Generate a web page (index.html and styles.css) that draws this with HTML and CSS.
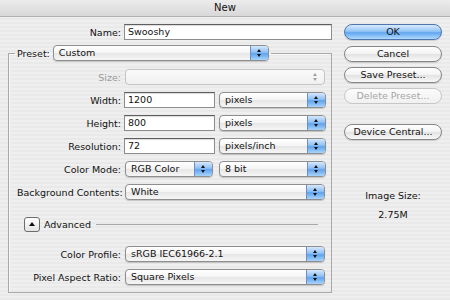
FILE: index.html
```html
<!DOCTYPE html>
<html lang="en">
<head>
    <meta charset="UTF-8">
    <title>New</title>
    <link rel="stylesheet" href="styles.css">
</head>
<body>
    <div class="titlebar">New</div>

    <div class="dialog">
        <div class="left">
            <div class="name-row">
                <span class="name-lbl">Name:</span>
                <div class="field name-field">Swooshy</div>
            </div>

            <fieldset class="preset">
                <legend>
                    Preset:
                    <div class="popup w-preset"><span class="popup-text">Custom</span><span class="popup-btn"></span></div>
                </legend>

                <div class="row">
                    <span class="lbl disabled">Size:</span>
                    <div class="popup w-full off"><span class="popup-text"></span><span class="popup-btn"></span></div>
                </div>
                <div class="row">
                    <span class="lbl">Width:</span>
                    <div class="field w-num">1200</div>
                    <div class="popup w-unit"><span class="popup-text">pixels</span><span class="popup-btn"></span></div>
                </div>
                <div class="row">
                    <span class="lbl">Height:</span>
                    <div class="field w-num">800</div>
                    <div class="popup w-unit"><span class="popup-text">pixels</span><span class="popup-btn"></span></div>
                </div>
                <div class="row">
                    <span class="lbl">Resolution:</span>
                    <div class="field w-num">72</div>
                    <div class="popup w-unit"><span class="popup-text">pixels/inch</span><span class="popup-btn"></span></div>
                </div>
                <div class="row">
                    <span class="lbl">Color Mode:</span>
                    <div class="popup w-mode"><span class="popup-text">RGB Color</span><span class="popup-btn"></span></div>
                    <div class="popup w-unit"><span class="popup-text">8 bit</span><span class="popup-btn"></span></div>
                </div>
                <div class="row">
                    <span class="lbl">Background Contents:</span>
                    <div class="popup w-full"><span class="popup-text">White</span><span class="popup-btn"></span></div>
                </div>

                <div class="row advanced">
                    <span class="disclosure"></span>
                    <span class="adv-text">Advanced</span>
                    <span class="adv-line"></span>
                </div>

                <div class="row row-profile">
                    <span class="lbl">Color Profile:</span>
                    <div class="popup w-full"><span class="popup-text">sRGB IEC61966-2.1</span><span class="popup-btn"></span></div>
                </div>
                <div class="row">
                    <span class="lbl">Pixel Aspect Ratio:</span>
                    <div class="popup w-full"><span class="popup-text">Square Pixels</span><span class="popup-btn"></span></div>
                </div>
            </fieldset>
        </div>

        <div class="right">
            <div class="btn btn-default">OK</div>
            <div class="btn">Cancel</div>
            <div class="btn">Save Preset...</div>
            <div class="btn btn-off">Delete Preset...</div>
            <div class="btn btn-device">Device Central...</div>

            <div class="image-size">
                <div>Image Size:</div>
                <div class="size-value">2.75M</div>
            </div>
        </div>
    </div>
</body>
</html>
```

FILE: styles.css
```css
body {
    margin: 0;
    width: 450px;
    height: 300px;
    overflow: hidden;
    font-family: "DejaVu Sans", Verdana, sans-serif;
    font-size: 9.5px;
    color: #111;
    background: repeating-linear-gradient(#efefef 0 2px, #e9e9e9 2px 4px);
}

.titlebar {
    height: 16px;
    line-height: 16px;
    text-align: center;
    font-size: 10px;
    background: linear-gradient(#ececec, #d8d8d8);
    border-bottom: 1px solid #b0b0b0;
}

.dialog {
    display: flex;
    padding: 7px 8px 0 8px;
}

.left {
    width: 324px;
}

.right {
    width: 98px;
    margin-left: 12px;
}

/* name row */
.name-row {
    display: flex;
    align-items: center;
    height: 16px;
}

.name-lbl {
    width: 113px;
    text-align: right;
    margin-right: 3px;
}

.name-field {
    width: 208px;
}

/* text fields */
.field {
    box-sizing: border-box;
    height: 16px;
    line-height: 14px;
    padding: 0 3px;
    background: #fff;
    border: 1px solid #8d8d8d;
    border-top-color: #5e5e5e;
    box-shadow: inset 0 1px 1px rgba(0, 0, 0, 0.15);
}

/* preset group */
.preset {
    margin: 5px 0 0 0;
    padding: 8px 5px 7px 8px;
    min-inline-size: 0;
    border: 1px solid #a8a8a8;
    box-shadow: inset 1px 1px 0 #f8f8f8;
}

.preset legend {
    display: flex;
    align-items: center;
    margin-left: -2px;
    padding: 0 2px;
}

.row {
    display: flex;
    align-items: center;
    height: 16px;
    margin-top: 7px;
}

.row:first-of-type {
    margin-top: 0;
}

.lbl {
    width: 104px;
    margin-right: 4px;
    text-align: right;
    white-space: nowrap;
}

.disabled {
    color: #9a9a9a;
}

/* popup menus */
.popup {
    box-sizing: border-box;
    display: flex;
    height: 16px;
    border: 1px solid #8e8e8e;
    border-radius: 4px;
    background: linear-gradient(#ffffff, #f4f4f4 50%, #e6e6e6 51%, #f6f6f6);
    box-shadow: 0 1px 1px rgba(0, 0, 0, 0.18);
    overflow: hidden;
}

.popup-text {
    flex: 1;
    line-height: 14px;
    padding-left: 5px;
    white-space: nowrap;
    overflow: hidden;
}

.popup-btn {
    position: relative;
    width: 17px;
    border-left: 1px solid #6f8fbf;
    background: linear-gradient(#d6e8fc, #8fc0f4 45%, #5fa3ee 55%, #a8d4fc);
}

.popup-btn::before,
.popup-btn::after {
    content: "";
    position: absolute;
    left: 6px;
    border-left: 2.5px solid transparent;
    border-right: 2.5px solid transparent;
}

.popup-btn::before {
    top: 3px;
    border-bottom: 3px solid #111;
}

.popup-btn::after {
    top: 8px;
    border-top: 3px solid #111;
}

.popup.off {
    border-color: #c4c4c4;
    box-shadow: none;
    background: linear-gradient(#fafafa, #f0f0f0);
}

.popup.off .popup-btn {
    border-left: none;
    background: none;
}

.popup.off .popup-btn::before {
    border-bottom-color: #a0a0a0;
}

.popup.off .popup-btn::after {
    border-top-color: #a0a0a0;
}

.w-preset {
    width: 216px;
    margin-left: 3px;
}

.w-full {
    width: 200px;
}

.w-num {
    width: 91px;
    margin-left: -1px;
}

.w-mode {
    width: 88px;
}

.w-unit {
    width: 107px;
    margin-left: auto;
}

/* advanced disclosure */
.advanced {
    margin-top: 16px;
}

.disclosure {
    position: relative;
    box-sizing: border-box;
    width: 16px;
    height: 15px;
    margin-left: 7px;
    border: 1px solid #6c6c6c;
    border-radius: 3px;
    background: linear-gradient(#ffffff, #e4e4e4);
}

.disclosure::after {
    content: "";
    position: absolute;
    left: 4px;
    top: 4px;
    border-left: 3px solid transparent;
    border-right: 3px solid transparent;
    border-bottom: 4px solid #111;
}

.adv-text {
    margin-left: 4px;
}

.adv-line {
    flex: 1;
    height: 1px;
    margin: 0 8px 0 5px;
    background: #a8a8a8;
}

.row-profile {
    margin-top: 14px;
}

/* buttons */
.btn {
    box-sizing: border-box;
    height: 16px;
    line-height: 14px;
    margin-bottom: 5px;
    text-align: center;
    border: 1px solid #868686;
    border-radius: 8px;
    background: linear-gradient(#ffffff, #f2f2f2 50%, #e2e2e2 51%, #f8f8f8);
    box-shadow: 0 1px 1px rgba(0, 0, 0, 0.15);
}

.btn-default {
    margin-bottom: 6px;
    border-color: #4f74ad;
    background: linear-gradient(#d9eafc, #94c4f6 45%, #62a6ef 55%, #b0dafe);
}

.btn-off {
    color: #a6a6a6;
    border-color: #c6c6c6;
    box-shadow: none;
    background: linear-gradient(#fbfbfb, #f1f1f1);
}

.btn-device {
    margin-top: 20px;
}

.image-size {
    margin-top: 50px;
    text-align: center;
    line-height: 12px;
}

.size-value {
    margin-top: 7px;
}
```
